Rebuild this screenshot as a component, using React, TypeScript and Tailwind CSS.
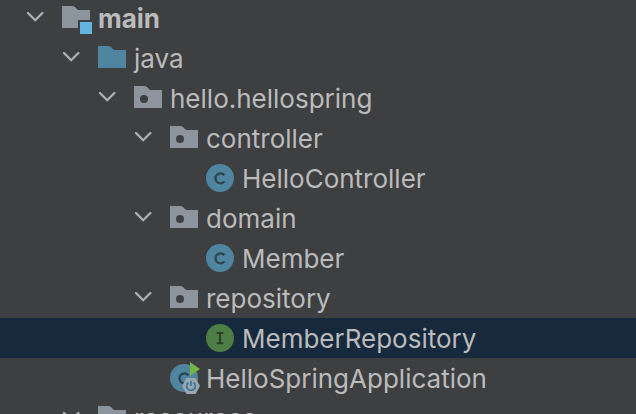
import type { ReactNode } from 'react'

type IconKind = 'module' | 'source' | 'package' | 'class' | 'interface' | 'springApp' | 'resources'

interface TreeNode {
  name: string
  icon: IconKind
  children?: TreeNode[]
  bold?: boolean
  selected?: boolean
}

const TREE: TreeNode[] = [
  {
    name: 'main',
    icon: 'module',
    bold: true,
    children: [
      {
        name: 'java',
        icon: 'source',
        children: [
          {
            name: 'hello.hellospring',
            icon: 'package',
            children: [
              {
                name: 'controller',
                icon: 'package',
                children: [{ name: 'HelloController', icon: 'class' }],
              },
              {
                name: 'domain',
                icon: 'package',
                children: [{ name: 'Member', icon: 'class' }],
              },
              {
                name: 'repository',
                icon: 'package',
                children: [{ name: 'MemberRepository', icon: 'interface', selected: true }],
              },
              { name: 'HelloSpringApplication', icon: 'springApp' },
            ],
          },
        ],
      },
      { name: 'resources', icon: 'resources', children: [] },
    ],
  },
]

const INDENT = ['pl-[25px]', 'pl-[61px]', 'pl-[97px]', 'pl-[133px]', 'pl-[169px]']

const FOLDER = 'M2 4h10q2 0 3 1l3 3h12v18H2z'

const CLASS_BADGE = (
  <>
    <circle cx="16" cy="16" r="14" fill="#4f859e" />
    <path d="M20.4 13.2a5 5 0 1 0 0 6.200" fill="none" stroke="#2c4450" strokeWidth="2.300" />
  </>
)

const ICONS: Record<IconKind, ReactNode> = {
  module: (
    <>
      <path d="M2 4h10q2 0 3 1l3 3h12v10H18v8H2z" fill="#8c959e" />
      <path d="M20 20h12v12H20z" fill="#62b3de" />
    </>
  ),
  source: <path d={FOLDER} fill="#50859f" />,
  package: (
    <>
      <path d={FOLDER} fill="#8c959e" />
      <circle cx="12" cy="17" r="4" fill="#3e3f41" />
    </>
  ),
  class: CLASS_BADGE,
  interface: (
    <>
      <circle cx="16" cy="16" r="14" fill="#4f7d46" />
      <path d="M12.800 11h6.400M12.800 21.200h6.400M16 11v10" fill="none" stroke="#2b3f28" strokeWidth="2" />
    </>
  ),
  springApp: (
    <>
      {CLASS_BADGE}
      <path d="M22 0l10 7-10 7z" fill="#74b345" />
      <path d="M18.500 16h9l4.500 8-4.500 8h-9L14 24z" fill="#9aa7b2" />
      <path d="M20.500 20.600a4.300 4.300 0 1 0 5 0M23 18.800v5.200" fill="none" stroke="#3f7896" strokeWidth="1.800" />
    </>
  ),
  resources: <path d={FOLDER} fill="#8c959e" />,
}

function Chevron() {
  return (
    <svg viewBox="0 0 20 20" className="size-5 shrink-0" aria-hidden="true">
      <path
        d="M3 5l7.200 7.200L17.400 5"
        fill="none"
        stroke="#b0b1b2"
        strokeWidth="2.300"
        strokeLinecap="round"
      />
    </svg>
  )
}

function TreeItem({ node, depth }: { node: TreeNode; depth: number }) {
  return (
    <li role="treeitem" aria-selected={!!node.selected} aria-expanded={node.children ? true : undefined}>
      <div className={`flex h-10 items-center ${INDENT[depth]} ${node.selected ? 'bg-[#17293d]' : ''}`}>
        {node.children ? (
          <button type="button" aria-label={`Toggle ${node.name}`} className="mr-[15px]">
            <Chevron />
          </button>
        ) : (
          <span className="mr-[15px] w-5" />
        )}
        <svg viewBox="0 0 32 32" className="size-8 shrink-0" aria-hidden="true">
          {ICONS[node.icon]}
        </svg>
        <span className={`ml-1.5 pt-0.5 whitespace-nowrap ${node.bold ? 'font-bold' : ''}`}>{node.name}</span>
      </div>
      {node.children && node.children.length > 0 && (
        <ul role="group">
          {node.children.map((child) => (
            <TreeItem key={child.name} node={child} depth={depth + 1} />
          ))}
        </ul>
      )}
    </li>
  )
}

export default function App() {
  return (
    <div className="h-screen overflow-hidden bg-[#3e3f41] font-['Inter',sans-serif] text-[26px] leading-10 text-[#bbbbbb]">
      <ul role="tree" aria-label="Project" className="-mt-0.5">
        {TREE.map((node) => (
          <TreeItem key={node.name} node={node} depth={0} />
        ))}
      </ul>
    </div>
  )
}
